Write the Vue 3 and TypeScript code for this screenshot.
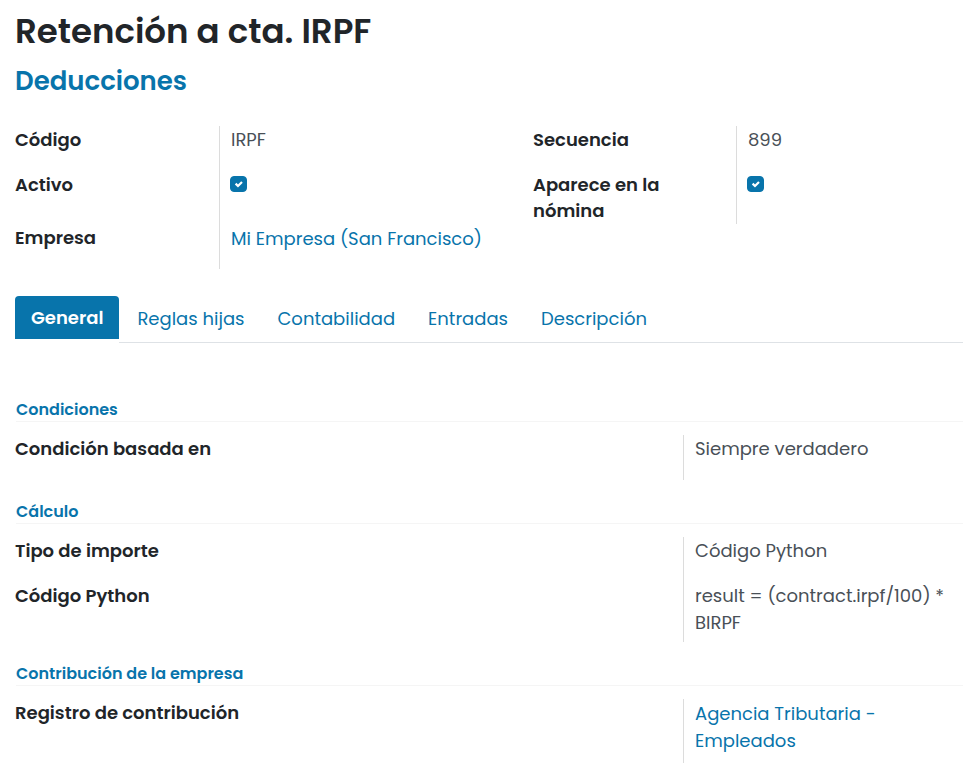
<script setup lang="ts">
import { ref } from 'vue'

interface Field {
  id: string
  label: string
  value: string
  link?: boolean
}

interface Section {
  title: string
  fields: Field[]
}

const activo = ref(true)
const apareceEnNomina = ref(true)

const tabs: string[] = ['General', 'Reglas hijas', 'Contabilidad', 'Entradas', 'Descripción']
const activeTab = ref('General')

const sections: Section[] = [
  {
    title: 'Condiciones',
    fields: [{ id: 'condicion', label: 'Condición basada en', value: 'Siempre verdadero' }],
  },
  {
    title: 'Cálculo',
    fields: [
      { id: 'tipo', label: 'Tipo de importe', value: 'Código Python' },
      { id: 'codigo-python', label: 'Código Python', value: 'result = (contract.irpf/100) * BIRPF' },
    ],
  },
  {
    title: 'Contribución de la empresa',
    fields: [
      { id: 'registro', label: 'Registro de contribución', value: 'Agencia Tributaria - Empleados', link: true },
    ],
  },
]
</script>

<template>
  <main class="sheet">
    <header class="heading">
      <h1>Retención a cta. IRPF</h1>
      <h2><a href="#deducciones">Deducciones</a></h2>
    </header>

    <div class="summary">
      <span class="label">Código</span>
      <span class="value">IRPF</span>
      <span class="label">Secuencia</span>
      <span class="value">899</span>

      <label class="label" for="activo">Activo</label>
      <span class="value check">
        <input id="activo" v-model="activo" type="checkbox" />
        <svg viewBox="0 0 17 16" aria-hidden="true"><path d="M5.6 7.6 L8 10 L12 6" /></svg>
      </span>
      <label class="label" for="nomina">Aparece en la nómina</label>
      <span class="value check">
        <input id="nomina" v-model="apareceEnNomina" type="checkbox" />
        <svg viewBox="0 0 17 16" aria-hidden="true"><path d="M5.6 7.6 L8 10 L12 6" /></svg>
      </span>

      <span class="label">Empresa</span>
      <span class="value linked"><a href="#empresa">Mi Empresa (San Francisco)</a></span>
    </div>

    <ul class="tabs" role="tablist">
      <li v-for="tab in tabs" :key="tab" :class="{ active: tab === activeTab }" role="presentation">
        <button type="button" role="tab" :aria-selected="tab === activeTab" @click="activeTab = tab">
          {{ tab }}
        </button>
      </li>
      <li class="filler" role="presentation"></li>
    </ul>

    <div class="panel" role="tabpanel">
      <section v-for="section in sections" :key="section.title">
        <h3>{{ section.title }}</h3>
        <div v-for="field in section.fields" :key="field.id" class="row">
          <span class="label">{{ field.label }}</span>
          <span class="value" :class="{ linked: field.link }">
            <a v-if="field.link" :href="'#' + field.id">{{ field.value }}</a>
            <template v-else>{{ field.value }}</template>
          </span>
        </div>
      </section>
    </div>
  </main>
</template>

<style>
body {
  margin: 0;
  background: #fff;
}
</style>

<style scoped>
.sheet {
  box-sizing: border-box;
  padding: 7px 0 4px 15px;
  color: #212529;
  font-family: Poppins, Inter, 'Open Sans', sans-serif;
  font-size: 18px;
  line-height: 27px;
}

a {
  color: #0874ab;
  text-decoration: none;
}

h1,
h2,
h3 {
  margin: 0;
  font-weight: 600;
}

h1 {
  font-size: 34px;
  line-height: 48px;
}

h2 {
  margin-top: 8px;
  font-size: 26px;
  line-height: 36px;
}

.summary {
  display: grid;
  grid-template-columns: 204fr 314fr 203fr 227fr;
  margin-top: 27px;
}

.label {
  padding: 1px 50px 0 0;
  font-weight: 600;
  line-height: 26px;
}

.value {
  box-sizing: border-box;
  min-height: 45px;
  padding: 0 8px 6px 11px;
  border-left: 1px solid #dcdcdc;
  color: #495057;
}

.summary .label {
  min-height: 45px;
  box-sizing: border-box;
}

.summary label.label {
  min-height: 53px;
}

.linked {
  padding: 1px 8px 9px 11px;
}

.check {
  display: grid;
  align-content: start;
  justify-content: start;
  padding: 5px 8px 0 10px;
}

.check input,
.check svg {
  grid-area: 1 / 1;
  width: 17px;
  height: 16px;
}

.check input {
  appearance: none;
  margin: 0;
  border: 1px solid #0874ab;
  border-radius: 4px;
  background: #fff;
}

.check input:checked {
  background: #0874ab;
}

.check svg {
  fill: none;
  stroke: #fff;
  stroke-width: 2.2;
  pointer-events: none;
}

.tabs {
  display: flex;
  margin: 27px 0 0;
  padding: 0;
  list-style: none;
}

.tabs li {
  padding: 0 0 3px 3px;
  border-bottom: 1px solid #dee2e6;
}

.tabs li.active {
  padding-left: 0;
  border-bottom-color: transparent;
}

.tabs .filler {
  flex: 1;
}

.tabs button {
  height: 43px;
  padding: 2px 15px 0;
  border: 0;
  border-radius: 4px 4px 0 0;
  background: transparent;
  color: #0874ab;
  font: inherit;
  white-space: nowrap;
}

.tabs .active button {
  padding: 0 16px;
  background: #0874ab;
  color: #fff;
  font-weight: 600;
}

.panel {
  padding-top: 35px;
}

h3 {
  margin: 0 0 13px 1px;
  padding-top: 20px;
  border-bottom: 1px solid #f5f5f5;
  color: #0874ab;
  font-size: 16px;
  line-height: 23px;
}

.row {
  display: grid;
  grid-template-columns: 668fr 280fr;
}
</style>
